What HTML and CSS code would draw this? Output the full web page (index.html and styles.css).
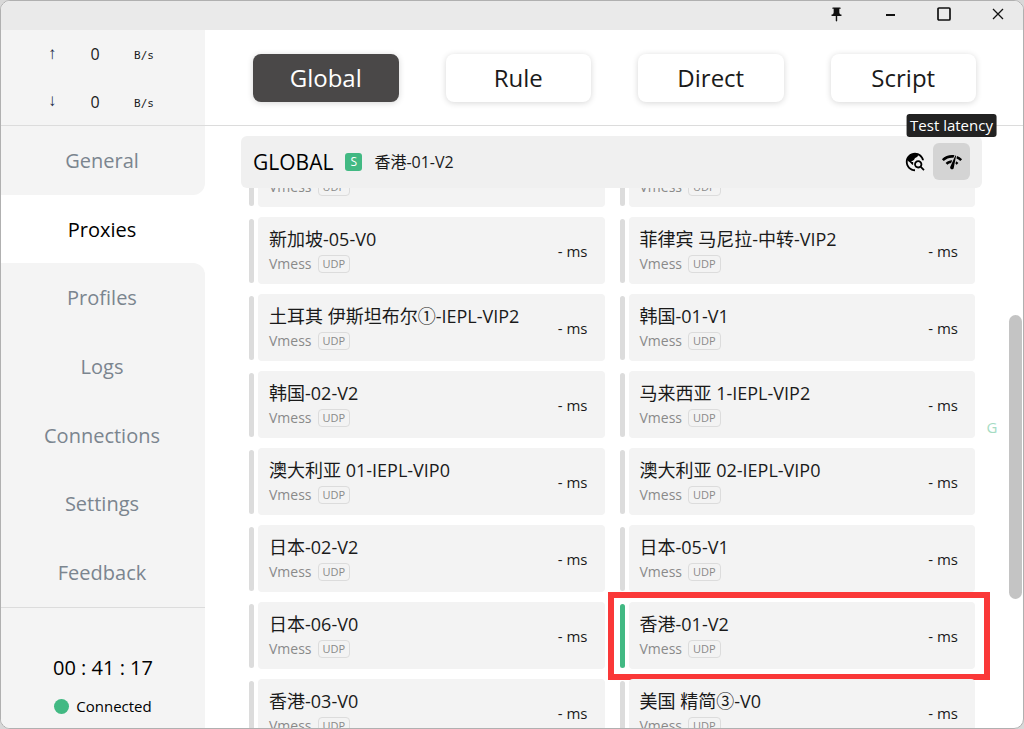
FILE: index.html
```html
<!DOCTYPE html>
<html lang="en">
<head>
<meta charset="utf-8">
<title>Proxies</title>
<link rel="stylesheet" href="styles.css">
</head>
<body>
<div class="window">
  <header class="titlebar">
    <button class="win-btn" type="button" aria-label="Pin"><svg width="17" height="17" viewBox="0 0 24 24"><path d="M16 9V4h1c.55 0 1-.45 1-1s-.45-1-1-1H7c-.55 0-1 .45-1 1s.45 1 1 1h1v5c0 1.660-1.340 3-3 3v2h5.970v7l1 1 1-1v-7H19v-2c-1.660 0-3-1.340-3-3z"/></svg></button>
    <button class="win-btn" type="button" aria-label="Minimize"><svg width="16" height="16" viewBox="0 0 16 16"><path d="M4 8h9v2H4z"/></svg></button>
    <button class="win-btn" type="button" aria-label="Maximize"><svg width="16" height="16" viewBox="0 0 16 16"><rect x="2" y="2" width="12" height="12" rx="1" fill="none" stroke="#111" stroke-width="1.700"/></svg></button>
    <button class="win-btn" type="button" aria-label="Close"><svg width="16" height="16" viewBox="0 0 16 16"><path d="M3 3l10 10M13 3L3 13" fill="none" stroke="#111" stroke-width="1.300"/></svg></button>
  </header>
  <div class="main">
    <aside class="sidebar">
      <div class="traffic">
        <span class="arrow">↑</span><span class="rate">0</span><span class="unit">B/s</span>
        <span class="arrow">↓</span><span class="rate">0</span><span class="unit">B/s</span>
      </div>
      <nav class="menu">
        <a class="menu-item before-active" href="#general">General</a>
        <a class="menu-item active" href="#proxies">Proxies</a>
        <a class="menu-item after-active" href="#profiles">Profiles</a>
        <a class="menu-item" href="#logs">Logs</a>
        <a class="menu-item" href="#connections">Connections</a>
        <a class="menu-item" href="#settings">Settings</a>
        <a class="menu-item" href="#feedback">Feedback</a>
      </nav>
      <div class="status">
        <div class="clock">00 : 41 : 17</div>
        <div class="connection"><span class="dot"></span>Connected</div>
      </div>
    </aside>
    <main class="content">
      <div class="modes">
        <button class="mode selected" type="button">Global</button>
        <button class="mode" type="button">Rule</button>
        <button class="mode" type="button">Direct</button>
        <button class="mode" type="button">Script</button>
      </div>
      <div class="body">
        <section class="group">
          <div class="group-head">
            <h1 class="group-name">GLOBAL</h1>
            <span class="group-type">S</span>
            <span class="group-now">香港-01-V2</span>
            <button class="tool" type="button" aria-label="Locate proxy"><svg width="22" height="22" viewBox="0 0 24 24"><path d="M19.300 16.900c.4-.7.7-1.500.7-2.400 0-2.500-2-4.500-4.500-4.500S11 12 11 14.500s2 4.500 4.500 4.500c.9 0 1.700-.3 2.400-.7l3.200 3.200 1.400-1.400-3.200-3.200zm-3.800.1c-1.400 0-2.500-1.100-2.500-2.500s1.100-2.500 2.500-2.500 2.500 1.100 2.500 2.500-1.100 2.500-2.500 2.500zM12 20v2C6.480 22 2 17.520 2 12S6.480 2 12 2c4.840 0 8.870 3.440 9.800 8h-2.070c-.64-2.460-2.400-4.470-4.730-5.410V5c0 1.100-.9 2-2 2h-2v2c0 .55-.45 1-1 1H8v2h2v3H9l-4.790-4.790C4.080 10.790 4 11.380 4 12c0 4.410 3.590 8 8 8z"/><path d="M4 9l4-5 5-1.500 2 1v2l-3 2-1 2-3 2H5z"/></svg></button>
            <button class="tool hover" type="button" aria-describedby="tip"><svg width="22" height="22" viewBox="0 0 24 24"><path d="M15.900 5c-.17 0-.32.09-.41.23l-.07.15-5.180 11.650c-.16.29-.26.61-.26.96 0 1.110.9 2.010 2.010 2.010.96 0 1.770-.68 1.960-1.590l.01-.03L16.400 5.500c0-.28-.22-.5-.5-.5zM1 9l2 2c2.880-2.880 6.790-4.080 10.530-3.620l1.190-2.680C9.890 3.840 4.740 5.270 1 9zm20 2l2-2c-1.640-1.640-3.550-2.820-5.590-3.570l-.53 2.820c1.500.62 2.900 1.530 4.120 2.750zm-4 4l2-2c-.8-.8-1.700-1.420-2.660-1.890l-.55 2.920c.42.27.83.59 1.210.97zM5 13l2 2c1.130-1.130 2.560-1.790 4.030-2l1.280-2.880c-2.630-.08-5.300.87-7.310 2.880z"/></svg><span class="tooltip" id="tip" role="tooltip">Test latency</span></button>
          </div>
          <ul class="proxies" id="proxies"></ul>
        </section>
        <nav class="index"><a href="#proxies">G</a></nav>
        <div class="scroll"><div class="thumb"></div></div>
      </div>
    </main>
  </div>
</div>
<script src="app.js"></script>
</body>
</html>
```
FILE: styles.css
```css
* { box-sizing: border-box; }
body {
  margin: 0;
  background: #d8d8d8;
  color: #1a1a1a;
  font-family: "Open Sans", "Noto Sans CJK SC", sans-serif;
}
button { margin: 0; padding: 0; border: 0; background: none; color: inherit; font: inherit; }
a { color: inherit; text-decoration: none; }
.window {
  display: flex;
  flex-direction: column;
  height: 100vh;
  overflow: hidden;
  border: 1px solid #b0b0b0;
  border-radius: 10px;
  background: #fff;
}
.titlebar {
  display: flex;
  flex: none;
  justify-content: flex-end;
  height: 29px;
  padding-bottom: 3px;
  background: #eaeaea;
}
.win-btn { display: grid; place-items: center; width: 54px; padding-left: 4px; }
.win-btn svg { fill: #111; }
.main { display: flex; flex: 1; min-height: 0; overflow: hidden; }
.sidebar { display: flex; flex: none; flex-direction: column; width: 204px; }
.traffic {
  display: grid;
  flex: none;
  grid-template-columns: 44px 42px 56px;
  grid-template-rows: 48px 47px;
  place-items: center;
  height: 96px;
  padding-left: 29px;
  border-bottom: 1px solid #dcdcdc;
  background: #f4f4f4;
}
.arrow { color: #222a44; font: 17px "Liberation Mono", monospace; }
.rate { font-size: 16px; }
.unit { padding-top: 3px; font: 11px "DejaVu Sans Mono", monospace; }
.menu { display: flex; flex: 1; flex-direction: column; background: #fff; }
.menu-item {
  display: grid;
  flex: 1;
  place-items: center;
  padding-right: 2px;
  background: #f4f4f4;
  color: #7b858f;
  font-size: 20px;
}
.menu-item.active { background: #fff; color: #000; }
.before-active { border-bottom-right-radius: 12px; }
.after-active { border-top-right-radius: 12px; }
.status {
  flex: none;
  height: 121px;
  padding-top: 46px;
  border-top: 1px solid #dcdcdc;
  background: #f4f4f4;
  color: #000;
  text-align: center;
}
.clock { font-size: 20px; line-height: 28px; }
.connection {
  display: flex;
  align-items: center;
  justify-content: center;
  gap: 7px;
  margin-top: 14px;
  font-size: 15px;
  line-height: 20px;
}
.dot { width: 15px; height: 15px; border-radius: 50%; background: #42b983; }
.content { display: flex; flex: 1; flex-direction: column; min-width: 0; }
.modes {
  display: grid;
  flex: none;
  grid-template-columns: repeat(4, 1fr);
  gap: 47px;
  height: 96px;
  padding: 24px 47px 23px 48px;
  border-bottom: 1px solid #dcdcdc;
}
.mode { border-radius: 8px; background: #fff; box-shadow: 0 1px 6px rgba(0, 0, 0, .16); font-size: 24px; line-height: 32px; }
.mode.selected { background: #4a4848; color: #fff; }
.body { display: flex; flex: 1; min-height: 0; }
.group { flex: 1; min-width: 0; padding: 10px 0 0 36px; }
.group-head {
  position: relative;
  z-index: 1;
  display: flex;
  align-items: center;
  height: 52px;
  padding: 0 12px 1px;
  border-radius: 6px;
  background: #f0f0f0;
}
.group-name { margin: 0; color: #000; font-size: 21px; font-weight: 400; line-height: 28px; }
.group-type {
  margin: 0 12px;
  width: 17px;
  border-radius: 3px;
  background: #42b983;
  color: #fff;
  font-size: 12px;
  line-height: 18px;
  text-align: center;
}
.group-now { flex: 1; font-size: 16px; line-height: 24px; }
.tool { position: relative; display: grid; place-items: center; width: 37px; height: 37px; border-radius: 6px; }
.tool.hover { background: #d4d4d4; }
.tooltip {
  position: absolute;
  bottom: 43px;
  left: 50%;
  transform: translateX(-50%);
  padding: 0 4px;
  border-radius: 3px;
  background: #222;
  color: #fff;
  font-size: 15px;
  line-height: 23px;
  white-space: nowrap;
}
.proxies {
  display: grid;
  grid-template-columns: 1fr 1fr;
  gap: 10px 15px;
  margin: -48px 0 0;
  padding: 0 7px 0 8px;
  list-style: none;
}
.proxy { position: relative; display: flex; align-items: stretch; gap: 4px; height: 67px; }
.bar { flex: none; width: 5px; margin: 2px 0 1px; border-radius: 3px; background: #dcdcdc; }
.proxy.current .bar { background: #42b983; }
.card {
  display: flex;
  flex: 1;
  align-items: center;
  justify-content: space-between;
  min-width: 0;
  padding: 0 17px 0 11px;
  border-radius: 4px;
  background: #f3f3f3;
}
.name { min-height: 26px; font-size: 18px; line-height: 26px; }
.meta { display: flex; align-items: center; gap: 6px; color: #8a8a8a; font-size: 14px; line-height: 24px; }
.udp { padding: 0 4px; border: 1px solid #dcdcdc; border-radius: 4px; font-size: 11px; line-height: 16px; }
.delay { font-size: 15px; }
.mark { position: absolute; inset: -10px -15px -11px -12px; border: 6px solid #fa3838; }
.index { display: grid; flex: none; place-items: center; width: 20px; color: #a5dcc3; font-size: 15px; }
.scroll { flex: none; width: 21px; padding: 189px 1px 0 7px; }
.thumb { height: 284px; border-radius: 7px; background: #c4c4c4; }
```
FILE: app.js
```js
const names = [
  "", "",
  "新加坡-05-V0", "菲律宾 马尼拉-中转-VIP2",
  "土耳其 伊斯坦布尔①-IEPL-VIP2", "韩国-01-V1",
  "韩国-02-V2", "马来西亚 1-IEPL-VIP2",
  "澳大利亚 01-IEPL-VIP0", "澳大利亚 02-IEPL-VIP0",
  "日本-02-V2", "日本-05-V1",
  "日本-06-V0", "香港-01-V2",
  "香港-03-V0", "美国 精简③-V0"
];
const current = "香港-01-V2";
document.getElementById("proxies").innerHTML = names.map(name => `
  <li class="proxy${name === current ? " current" : ""}">
    <span class="bar"></span>
    <div class="card">
      <div>
        <div class="name">${name}</div>
        <div class="meta">Vmess <span class="udp">UDP</span></div>
      </div>
      <span class="delay">${name ? "- ms" : ""}</span>
    </div>
    ${name === current ? '<span class="mark"></span>' : ""}
  </li>`).join("");
```
